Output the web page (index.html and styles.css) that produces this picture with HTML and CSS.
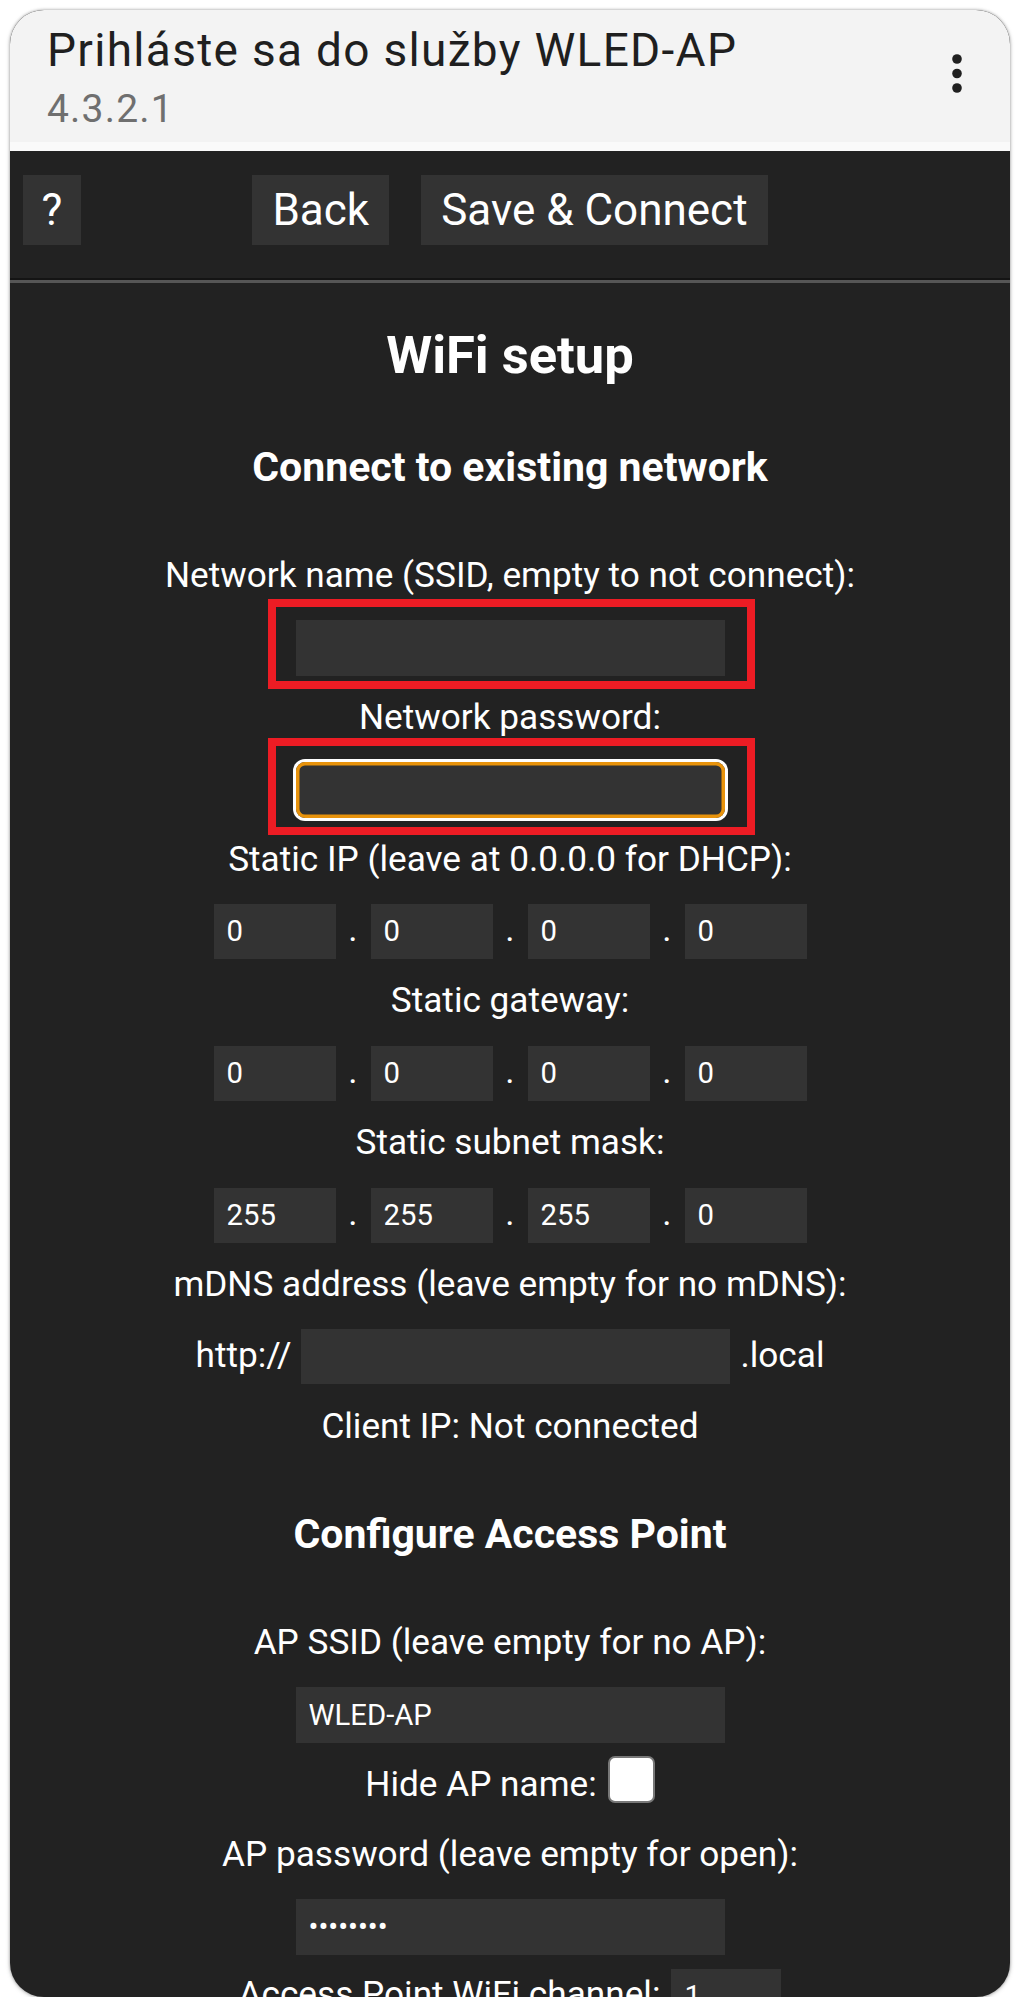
FILE: index.html
```html
<!DOCTYPE html>
<html lang="sk">
<head>
<meta charset="utf-8">
<title>WLED-AP</title>
<link rel="stylesheet" href="styles.css">
</head>
<body>
<div class="card">
  <header class="bar">
    <div class="bar-text">
      <div class="bar-title">Prihláste sa do služby WLED-AP</div>
      <div class="bar-sub">4.3.2.1</div>
    </div>
    <svg class="kebab" width="10" height="40" viewBox="0 0 10 40" aria-hidden="true">
      <circle cx="5" cy="5" r="4.8"/>
      <circle cx="5" cy="19.5" r="4.8"/>
      <circle cx="5" cy="34" r="4.8"/>
    </svg>
  </header>
  <div class="stripe"></div>
  <main class="page">
    <div class="toprow">
      <div class="nav">
        <div class="nav-left"><button class="btn btn-help" type="button">?</button></div>
        <div class="nav-mid">
          <button class="btn" type="button">Back</button>
          <button class="btn" type="button">Save &amp; Connect</button>
        </div>
        <div class="nav-right"></div>
      </div>
      <hr class="rule">
    </div>

    <h2 class="h2">WiFi setup</h2>
    <h3 class="h3">Connect to existing network</h3>

    <div class="lbl">Network name (SSID, empty to not connect):</div>
    <div class="fld"><span class="mark mark-a"><input class="txt" type="text"></span></div>

    <div class="lbl">Network password:</div>
    <div class="fld"><span class="mark mark-b"><input class="txt txt-focus" type="password"></span></div>

    <div class="lbl">Static IP (leave at 0.0.0.0 for DHCP):</div>
    <div class="fld">
      <div class="ip">
        <input class="num" type="number" value="0"><span class="dot">.</span><input class="num" type="number" value="0"><span class="dot">.</span><input class="num" type="number" value="0"><span class="dot">.</span><input class="num" type="number" value="0">
      </div>
    </div>

    <div class="lbl">Static gateway:</div>
    <div class="fld">
      <div class="ip">
        <input class="num" type="number" value="0"><span class="dot">.</span><input class="num" type="number" value="0"><span class="dot">.</span><input class="num" type="number" value="0"><span class="dot">.</span><input class="num" type="number" value="0">
      </div>
    </div>

    <div class="lbl">Static subnet mask:</div>
    <div class="fld">
      <div class="ip">
        <input class="num" type="number" value="255"><span class="dot">.</span><input class="num" type="number" value="255"><span class="dot">.</span><input class="num" type="number" value="255"><span class="dot">.</span><input class="num" type="number" value="0">
      </div>
    </div>

    <div class="lbl">mDNS address (leave empty for no mDNS):</div>
    <div class="fld">
      <div class="ip">
        <span class="plain">http://</span><input class="txt txt-gap" type="text"><span class="plain">.local</span>
      </div>
    </div>

    <div class="lbl">Client IP: Not connected</div>

    <h3 class="h3">Configure Access Point</h3>

    <div class="lbl">AP SSID (leave empty for no AP):</div>
    <div class="fld"><input class="txt" type="text" value="WLED-AP"></div>

    <div class="lbl lbl-row"><span class="plain">Hide AP name:</span><input class="cb" type="checkbox"></div>

    <div class="lbl">AP password (leave empty for open):</div>
    <div class="fld"><input class="txt" type="password" value="wledpass"></div>

    <div class="lbl lbl-row">
      <div class="ip"><span class="plain">Access Point WiFi channel:</span><input class="num num-ch" type="number" value="1"></div>
    </div>
  </main>
</div>
</body>
</html>
```

FILE: styles.css
```css
html, body {
  margin: 0;
  padding: 0;
  background: #ffffff;
}

body {
  padding: 10px 10px 0;
  font-family: "Roboto", "Noto Sans", sans-serif;
}

.card {
  width: 1000px;
  height: 1987px;
  border-radius: 34px;
  overflow: hidden;
  background: #222222;
  box-shadow: 0 0 3px rgba(0, 0, 0, 0.35), 0 1px 5px rgba(0, 0, 0, 0.18);
}

/* top bar */
.bar {
  height: 132px;
  box-sizing: border-box;
  background: #f3f3f3;
  display: flex;
  align-items: center;
  padding: 0 48px 0 37px;
}

.bar-text {
  flex: 1;
  padding-top: 3px;
}

.bar-title {
  font-size: 46px;
  line-height: 56px;
  color: #1f1f1f;
  letter-spacing: 1.3px;
}

.bar-sub {
  margin-top: 7px;
  font-size: 39px;
  line-height: 48px;
  color: #6f6f6f;
  letter-spacing: 1.2px;
}

.kebab {
  fill: #202020;
  margin-bottom: 5px;
}

.stripe {
  height: 9px;
  background: #fafafa;
}

/* dark page */
.page {
  color: #ffffff;
  text-align: center;
  font-size: 35.2px;
}

.nav {
  height: 127px;
  box-sizing: border-box;
  padding: 24px 13px 0;
  display: grid;
  grid-template-columns: 1fr auto 1fr;
  align-items: start;
}

.nav-left {
  display: flex;
  justify-content: flex-start;
}

.nav-mid {
  display: flex;
  gap: 32px;
}

.btn {
  height: 70px;
  padding: 0 20px;
  margin: 0;
  border: 0;
  border-radius: 0;
  background: #333333;
  color: #ffffff;
  font-family: "Roboto", sans-serif;
  font-size: 44px;
  line-height: 70px;
}

.btn-help {
  width: 58px;
  padding: 0;
}

.rule {
  margin: 0;
  height: 0;
  border: 0;
  border-top: 2px solid #141414;
  border-bottom: 3px solid #565656;
}

.h2 {
  margin: 33px 0 0;
  height: 78px;
  font-size: 52.5px;
  line-height: 78px;
  font-weight: 700;
}

.h3 {
  margin: 32px 0;
  height: 82px;
  font-size: 41px;
  line-height: 82px;
  font-weight: 700;
}

.lbl {
  height: 70.4px;
  line-height: 70.4px;
}

.lbl-row {
  display: flex;
  justify-content: center;
  align-items: center;
}

.fld {
  height: 71.4px;
  box-sizing: border-box;
  padding-top: 3.6px;
  display: flex;
  justify-content: center;
  align-items: center;
}

.ip {
  display: flex;
  align-items: baseline;
  line-height: normal;
}

.plain {
  line-height: normal;
}

.dot {
  width: 35px;
  text-align: center;
  line-height: normal;
}

input {
  margin: 0;
  border: 0;
  outline: none;
  background: #333333;
  color: #ffffff;
  font-family: "Roboto", sans-serif;
  font-size: 29.3px;
  box-sizing: border-box;
  border-radius: 0;
}

.txt {
  width: 429px;
  height: 56px;
  padding: 0 13px;
}

.txt-gap {
  height: 55px;
  margin: 0 10px;
}

.txt-focus {
  border-radius: 9px;
  box-shadow: 0 0 0 3px #ffffff, inset 0 0 0 3.5px #e8930c;
}

.num {
  width: 122px;
  height: 55px;
  padding: 0 13px;
  -moz-appearance: textfield;
}

.num::-webkit-inner-spin-button,
.num::-webkit-outer-spin-button {
  -webkit-appearance: none;
  margin: 0;
}

.num-ch {
  width: 110px;
  margin-left: 11px;
}

.cb {
  -webkit-appearance: none;
  appearance: none;
  width: 47px;
  height: 47px;
  margin: 0 0 10px 11px;
  background: #ffffff;
  border: 2.5px solid #787878;
  border-radius: 7px;
}

/* red annotation boxes */
.mark {
  display: flex;
  border: 8px solid #ed1c24;
}

.mark-a {
  padding: 13px 22px 5px 20px;
  margin: -21px -30px -13px -28px;
}

.mark-b {
  padding: 16px 22px 9px 20px;
  margin: -24px -30px -17px -28px;
}
```
